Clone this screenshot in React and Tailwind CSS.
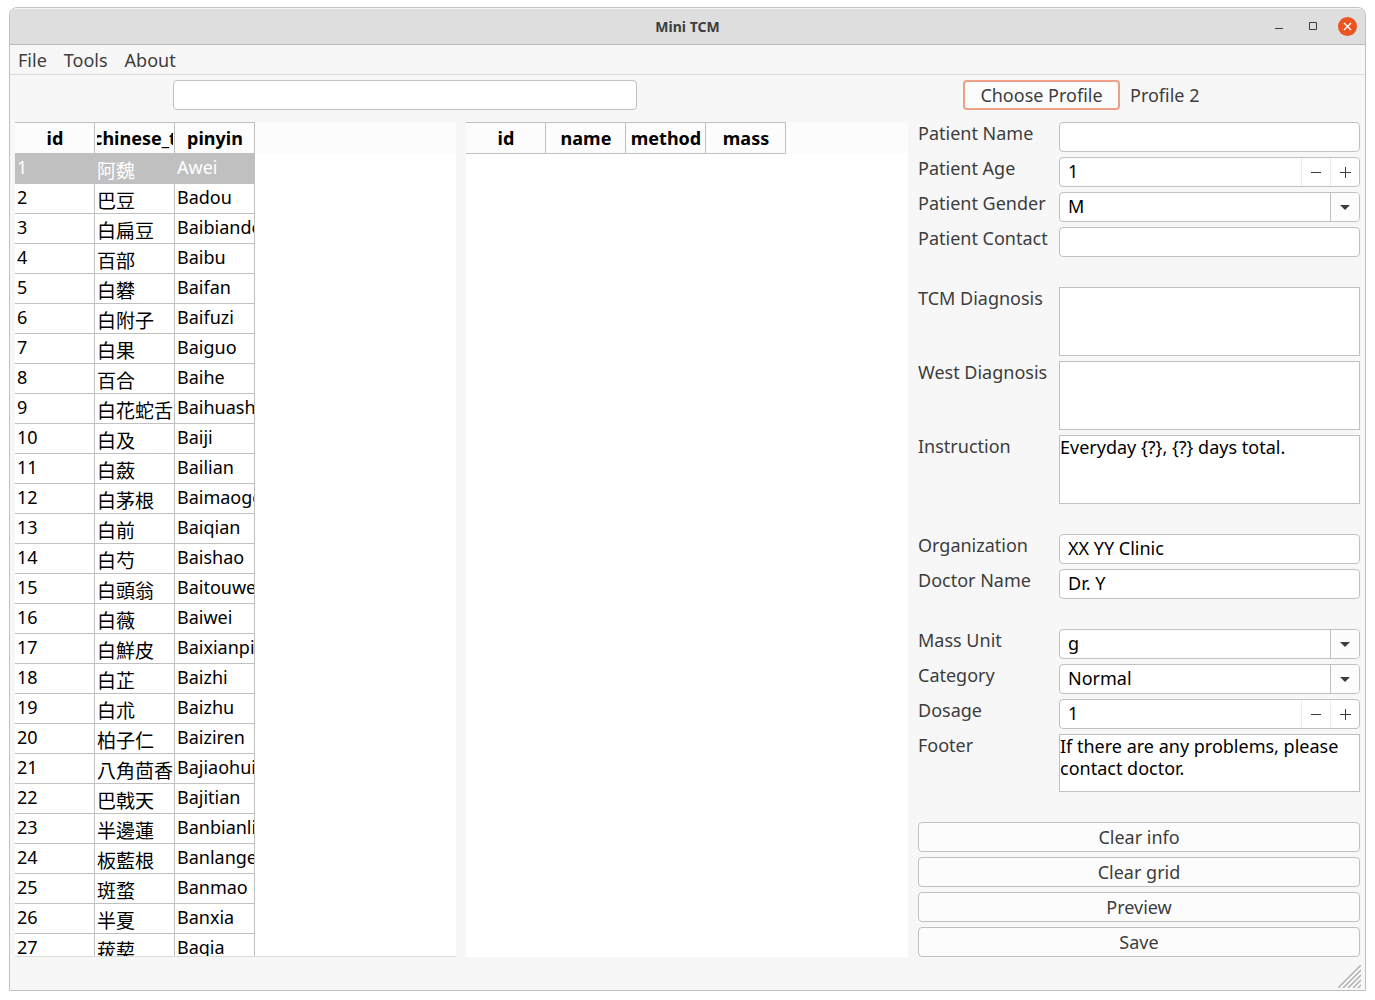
import { useState } from "react";

const HERBS = [
  ["阿魏", "Awei"],
  ["巴豆", "Badou"],
  ["白扁豆", "Baibiandou"],
  ["百部", "Baibu"],
  ["白礬", "Baifan"],
  ["白附子", "Baifuzi"],
  ["白果", "Baiguo"],
  ["百合", "Baihe"],
  ["白花蛇舌草", "Baihuasheshecao"],
  ["白及", "Baiji"],
  ["白蘞", "Bailian"],
  ["白茅根", "Baimaogen"],
  ["白前", "Baiqian"],
  ["白芍", "Baishao"],
  ["白頭翁", "Baitouweng"],
  ["白薇", "Baiwei"],
  ["白鮮皮", "Baixianpi"],
  ["白芷", "Baizhi"],
  ["白朮", "Baizhu"],
  ["柏子仁", "Baiziren"],
  ["八角茴香", "Bajiaohuixiang"],
  ["巴戟天", "Bajitian"],
  ["半邊蓮", "Banbianlian"],
  ["板藍根", "Banlangen"],
  ["斑蝥", "Banmao"],
  ["半夏", "Banxia"],
  ["菝葜", "Baqia"],
];

const BOX = "w-full rounded-[4px] border border-[#c0c0c0] bg-white text-black";
const FOCUS = "outline-none focus:border-[#e9967a]";

function HeadCell({ children }) {
  return (
    <th
      scope="col"
      className="h-[32px] border-y border-r border-[#c0c0c0] bg-[#fcfcfc] p-0 pr-px pl-[2px] text-[18px] leading-[22px] font-bold"
    >
      <div className="flex justify-center overflow-hidden whitespace-nowrap">{children}</div>
    </th>
  );
}

function HerbTable() {
  const [selected, setSelected] = useState(0);
  return (
    <div className="overflow-hidden border-b border-[#dcdcdc] bg-white [contain:size]">
      <div className="bg-[#fcfcfc]">
        <table className="w-[240px] table-fixed border-separate border-spacing-0 bg-white text-black">
          <thead>
            <tr>
              <HeadCell>id</HeadCell>
              <HeadCell>chinese_t</HeadCell>
              <HeadCell>pinyin</HeadCell>
            </tr>
          </thead>
        </table>
      </div>
      <table aria-label="Herbs" className="w-[240px] table-fixed border-separate border-spacing-0 text-black">
        <tbody>
          {HERBS.map(([name, pinyin], i) => (
            <tr
              key={name}
              onClick={() => setSelected(i)}
              className={i === selected ? "bg-[#c0c0c0] text-white" : "bg-white"}
            >
              <td className="h-[30px] border-r border-b border-[#c0c0c0] p-0 pl-[2px] align-top leading-[26px]">
                {i + 1}
              </td>
              <td className="h-[30px] border-r border-b border-[#c0c0c0] p-0 pl-[2px] align-top">
                <div className="h-[29px] overflow-hidden pt-[4px] text-[19px] leading-[26px] whitespace-nowrap">
                  {name}
                </div>
              </td>
              <td className="h-[30px] border-r border-b border-[#c0c0c0] p-0 pl-[2px] align-top">
                <div className="h-[29px] overflow-hidden leading-[26px] whitespace-nowrap">{pinyin}</div>
              </td>
            </tr>
          ))}
        </tbody>
      </table>
    </div>
  );
}

function RecipeTable() {
  return (
    <div className="overflow-hidden bg-white [contain:size]">
      <div className="bg-[#fcfcfc]">
        <table className="w-[320px] table-fixed border-separate border-spacing-0 text-black">
          <thead>
            <tr>
              <HeadCell>id</HeadCell>
              <HeadCell>name</HeadCell>
              <HeadCell>method</HeadCell>
              <HeadCell>mass</HeadCell>
            </tr>
          </thead>
        </table>
      </div>
    </div>
  );
}

function Row({ id, label, children }) {
  return (
    <div className="grid grid-cols-[136px_minmax(0,1fr)] gap-x-[5px]">
      <label htmlFor={id} className="whitespace-nowrap">
        {label}
      </label>
      {children}
    </div>
  );
}

function TextRow({ id, label, value = "" }) {
  return (
    <Row id={id} label={label}>
      <input id={id} type="text" defaultValue={value} className={`${BOX} ${FOCUS} h-[30px] px-[8px] pb-[2px]`} />
    </Row>
  );
}

function SpinRow({ id, label }) {
  const [n, setN] = useState(1);
  return (
    <Row id={id} label={label}>
      <div className={`${BOX} flex h-[30px] overflow-hidden`}>
        <input
          id={id}
          type="number"
          value={n}
          onChange={(e) => setN(Number(e.target.value))}
          className="min-w-0 flex-1 px-[8px] pb-[2px] outline-none [appearance:textfield] [&::-webkit-inner-spin-button]:appearance-none"
        />
        <button
          type="button"
          aria-label={`Decrease ${label}`}
          onClick={() => setN(n - 1)}
          className="flex w-[29px] items-center justify-center border-l border-[#ececec]"
        >
          <svg width="12" height="12" viewBox="0 0 12 12" stroke="#3d3d3d" strokeWidth="1">
            <path d="M1 6.5h10" />
          </svg>
        </button>
        <button
          type="button"
          aria-label={`Increase ${label}`}
          onClick={() => setN(n + 1)}
          className="flex w-[29px] items-center justify-center border-l border-[#ececec]"
        >
          <svg width="12" height="12" viewBox="0 0 12 12" stroke="#3d3d3d" strokeWidth="1">
            <path d="M1 6.5h11M6.5 1v11" />
          </svg>
        </button>
      </div>
    </Row>
  );
}

function SelectRow({ id, label, options }) {
  return (
    <Row id={id} label={label}>
      <div className="relative">
        <select id={id} className={`${BOX} ${FOCUS} block h-[30px] appearance-none px-[8px] pb-[2px]`}>
          {options.map((o) => (
            <option key={o}>{o}</option>
          ))}
        </select>
        <span className="pointer-events-none absolute inset-y-px right-px flex w-[29px] items-center justify-center rounded-r-[3px] border-l border-[#c0c0c0] bg-[#fcfcfc]">
          <svg width="10" height="5" viewBox="0 0 10 5" fill="#3d3d3d">
            <path d="M0 0h10L5 5z" />
          </svg>
        </span>
      </div>
    </Row>
  );
}

function AreaRow({ id, label, value = "", size = "h-[69px]" }) {
  return (
    <Row id={id} label={label}>
      <textarea
        id={id}
        defaultValue={value}
        className={`${size} ${FOCUS} block w-full resize-none overflow-hidden border border-[#c0c0c0] bg-white text-black`}
      />
    </Row>
  );
}

function Group({ children }) {
  return <div className="flex flex-col gap-[5px]">{children}</div>;
}

function PatientForm() {
  return (
    <form onSubmit={(e) => e.preventDefault()} className="flex flex-col gap-[30px]">
      <Group>
        <TextRow id="patient-name" label="Patient Name" />
        <SpinRow id="patient-age" label="Patient Age" />
        <SelectRow id="patient-gender" label="Patient Gender" options={["M", "F"]} />
        <TextRow id="patient-contact" label="Patient Contact" />
      </Group>
      <Group>
        <AreaRow id="tcm-diagnosis" label="TCM Diagnosis" />
        <AreaRow id="west-diagnosis" label="West Diagnosis" />
        <AreaRow id="instruction" label="Instruction" value="Everyday {?}, {?} days total." />
      </Group>
      <Group>
        <TextRow id="organization" label="Organization" value="XX YY Clinic" />
        <TextRow id="doctor-name" label="Doctor Name" value="Dr. Y" />
      </Group>
      <Group>
        <SelectRow id="mass-unit" label="Mass Unit" options={["g"]} />
        <SelectRow id="category" label="Category" options={["Normal"]} />
        <SpinRow id="dosage" label="Dosage" />
        <AreaRow
          id="footer"
          label="Footer"
          size="h-[58px]"
          value="If there are any problems, please contact doctor."
        />
      </Group>
      <Group>
        {["Clear info", "Clear grid", "Preview", "Save"].map((t) => (
          <button key={t} type="button" className="h-[30px] rounded-[4px] border border-[#c0c0c0] bg-[#fcfcfc]">
            {t}
          </button>
        ))}
      </Group>
    </form>
  );
}

function TitleBar() {
  return (
    <header className="grid h-[37px] grid-cols-[1fr_auto_1fr] items-center border-b border-[#b8b8b8] bg-[#dedede] shadow-[inset_0_1px_0_#f6f6f6]">
      <h1 className="col-start-2 pt-px text-[14px] leading-[20px] font-bold">Mini TCM</h1>
      <div className="flex items-center justify-end gap-[15px] pr-[8px]">
        <button type="button" aria-label="Minimize" className="size-[19px]">
          <svg width="19" height="19" viewBox="0 0 19 19" stroke="#3d3d3d">
            <path d="M5 11.5h8" />
          </svg>
        </button>
        <button type="button" aria-label="Maximize" className="size-[19px]">
          <svg width="19" height="19" viewBox="0 0 19 19" fill="none" stroke="#3d3d3d">
            <path d="M5.5 5.5h7v7h-7z" />
          </svg>
        </button>
        <button type="button" aria-label="Close" className="size-[19px]">
          <svg width="19" height="19" viewBox="0 0 19 19" fill="none">
            <circle cx="9.5" cy="9.5" r="9.5" fill="#e95420" />
            <path d="M6 6l7 7M13 6l-7 7" stroke="#fff" strokeWidth="1.4" />
          </svg>
        </button>
      </div>
    </header>
  );
}

export default function App() {
  return (
    <div className="flex min-h-screen flex-col bg-white px-[9px] pt-[7px] pb-[9px] font-['Noto_Sans','Noto_Sans_CJK_JP',sans-serif] text-[18px] leading-[22px] text-[#3d3d3d]">
      <div className="flex flex-1 flex-col overflow-hidden rounded-t-[8px] border border-[#c0c0c0] bg-[#f7f7f7]">
        <TitleBar />
        <nav className="flex h-[30px] items-center gap-[17px] border-b border-[#dcdcdc] px-[8px]">
          <button type="button">File</button>
          <button type="button">Tools</button>
          <button type="button">About</button>
        </nav>
        <main className="flex flex-1 flex-col gap-[12px] px-[5px] pt-[5px]">
          <div className="grid grid-cols-[158fr_464fr_326fr_397fr] items-center">
            <input
              type="text"
              aria-label="Search herbs"
              className={`${BOX} ${FOCUS} col-start-2 h-[30px] px-[8px]`}
            />
            <div className="col-start-4 flex items-center gap-[10px]">
              <button
                type="button"
                className="h-[30px] w-[157px] rounded-[4px] border-2 border-[#eda088] bg-[#fcfcfc] whitespace-nowrap"
              >
                Choose Profile
              </button>
              <output>Profile 2</output>
            </div>
          </div>
          <div className="grid flex-1 grid-cols-[441fr_442fr_442fr] gap-[10px]">
            <HerbTable />
            <RecipeTable />
            <PatientForm />
          </div>
        </main>
        <footer className="flex h-[33px] items-end justify-end pr-[4px] pb-[2px]">
          <svg width="23" height="23" viewBox="0 0 23 23" stroke="#b0b0b0" strokeWidth="1.5">
            <path d="M0 23L23 0M5 23L23 5M10 23L23 10M15 23L23 15M20 23L23 20" />
          </svg>
        </footer>
      </div>
    </div>
  );
}
